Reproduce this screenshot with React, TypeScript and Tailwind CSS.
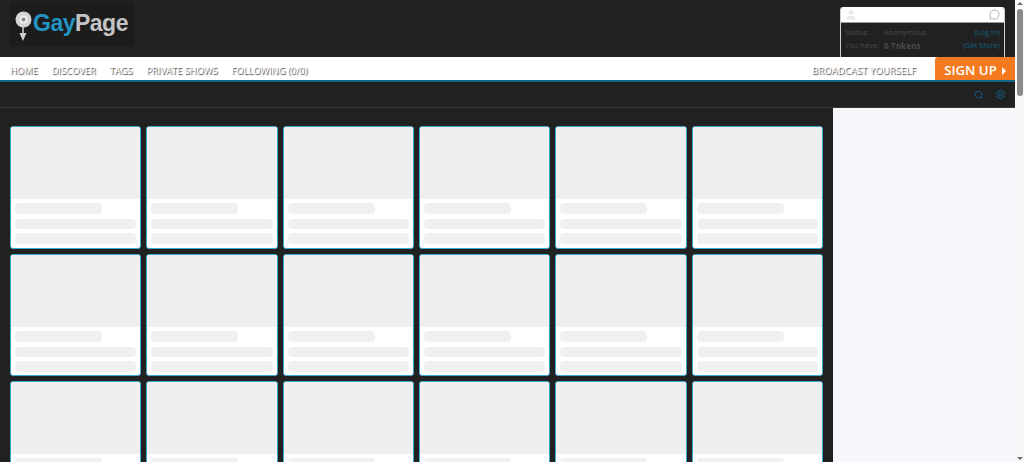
import React from 'react';
import { Search, Settings, User, MessageCircle } from 'lucide-react';

const navLinks = ['HOME', 'DISCOVER', 'TAGS', 'PRIVATE SHOWS', 'FOLLOWING (0/0)'];
const cards = Array.from({ length: 24 });

function NavLink({ label }: { label: string }) {
    return (
        <a className="text-[9.3px] text-white whitespace-nowrap [text-shadow:1px_1px_1px_#333]">{label}</a>
    );
}

function SkeletonCard() {
    return (
        <div className="h-[122.5px] bg-white border border-[#3aa9d0] rounded-[3px] overflow-hidden flex flex-col">
            <div className="h-[72px] bg-[#efefef] shrink-0"></div>
            <div className="flex flex-col px-[4px] pt-[4px]">
                <div className="h-[11px] w-[87px] bg-[#f0f0f0] rounded-[4px]"></div>
                <div className="h-[10px] mt-[5px] bg-[#f0f0f0] rounded-[4px]"></div>
                <div className="h-[11px] mt-[4px] bg-[#f0f0f0] rounded-[4px]"></div>
            </div>
        </div>
    );
}

export default function App() {
    return (
        <div className="w-[1024px] h-[462px] overflow-hidden flex bg-white font-['Open_Sans','Liberation_Sans',sans-serif]">
            <div className="w-[1015px] flex flex-col shrink-0">
                {/* Top header */}
                <div className="h-[57px] bg-[#212121] flex justify-between pl-[10px] pr-[10px] pt-[3px] shrink-0">
                    <div className="w-[124px] h-[43px] bg-[#1c1c1c] flex items-center pl-[5px]">
                        <svg width="22" height="38" viewBox="0 0 22 38" className="shrink-0 -mt-[1px]">
                            <circle cx="8.5" cy="14.5" r="8" fill="#d4d4d4" />
                            <circle cx="8.5" cy="14.5" r="4" fill="#eeeeee" />
                            <circle cx="8.5" cy="14.5" r="2" fill="#8a8a8a" />
                            <path d="M8 22v7" stroke="#d0d0d0" strokeWidth="1.5" />
                            <path d="M4.5 28h7l-3.5 8z" fill="#d0d0d0" />
                        </svg>
                        <div className="text-[23px] font-bold tracking-[-0.5px] leading-none font-['Liberation_Sans',sans-serif] -mt-[2px] -ml-[4px]">
                            <span className="text-[#2295c4]">Gay</span>
                            <span className="text-[#c4c4c4]">Page</span>
                        </div>
                    </div>
                    <div className="w-[165px] mt-[4px] h-[53px] border-x border-[#d0d0d0] rounded-t-[3px] overflow-hidden">
                        <div className="h-[16px] bg-white flex items-center justify-between px-[4px] border-b border-[#999]">
                            <User className="w-[12px] h-[12px] text-[#e4e4e4] fill-[#ececec]" />
                            <MessageCircle className="w-[11px] h-[11px] text-[#aaa]" />
                        </div>
                        <div className="text-[7.5px] leading-[13px] text-[#4a4a4a] pl-[4px] pr-[4px] pt-[3px]">
                            <div className="flex">
                                <span className="w-[39px]">Status:</span>
                                <span>Anonymous</span>
                                <span className="ml-auto text-[#125f7d]">(Log In)</span>
                            </div>
                            <div className="flex">
                                <span className="w-[39px]">You have:</span>
                                <span className="font-bold text-[8px] tracking-[0.2px]">0 Tokens</span>
                                <span className="ml-auto text-[#125f7d]">(Get More)</span>
                            </div>
                        </div>
                    </div>
                </div>

                {/* Nav bar */}
                <div className="h-[25px] bg-white border-b-2 border-[#15658a] flex items-center justify-between pl-[10px] shrink-0">
                    <div className="flex gap-[14px] pt-[5px]">
                        {navLinks.map(label => (
                            <NavLink key={label} label={label} />
                        ))}
                    </div>
                    <div className="flex items-center gap-[19px] h-full">
                        <div className="flex pt-[5px] tracking-[0.17px]">
                            <NavLink label="BROADCAST YOURSELF" />
                        </div>
                        <div className="w-[80px] h-full bg-[#f47a20] rounded-tl-[3px] flex items-center justify-center gap-[5px] pt-[5px] text-white text-[13.2px] font-semibold">
                            SIGN UP
                            <span className="w-0 h-0 border-y-[4px] border-y-transparent border-l-[4px] border-l-white"></span>
                        </div>
                    </div>
                </div>

                {/* Toolbar */}
                <div className="h-[26px] bg-[#212121] border-b border-[#3a3a3a] flex items-center justify-end gap-[11px] pr-[9px] shrink-0">
                    <Search className="w-[10px] h-[10px] text-[#11648a]" />
                    <Settings className="w-[11px] h-[11px] text-[#11648a]" />
                </div>

                {/* Content */}
                <div className="flex flex-1 min-h-0">
                    <div className="w-[833px] bg-[#212121] pl-[10px] pr-[10px] pt-[18px] overflow-hidden">
                        <div className="grid grid-cols-6 gap-[5px]">
                            {cards.map((_, i) => (
                                <SkeletonCard key={i} />
                            ))}
                        </div>
                    </div>
                    <div className="flex-1 bg-[#f7f8fb]"></div>
                </div>
            </div>

            {/* Scrollbar */}
            <div className="w-[9px] bg-[#f8f8f8] flex flex-col items-center justify-between">
                <div className="flex flex-col items-center w-full">
                    <div className="mt-[2px] w-0 h-0 border-x-[3px] border-x-transparent border-b-[3px] border-b-[#6a6a6a]"></div>
                    <div className="mt-[4px] w-[6px] h-[87px] bg-[#8a8a8a] rounded-[3px]"></div>
                </div>
                <div className="mb-[2px] w-0 h-0 border-x-[3px] border-x-transparent border-t-[3px] border-t-[#6a6a6a]"></div>
            </div>
        </div>
    );
}
